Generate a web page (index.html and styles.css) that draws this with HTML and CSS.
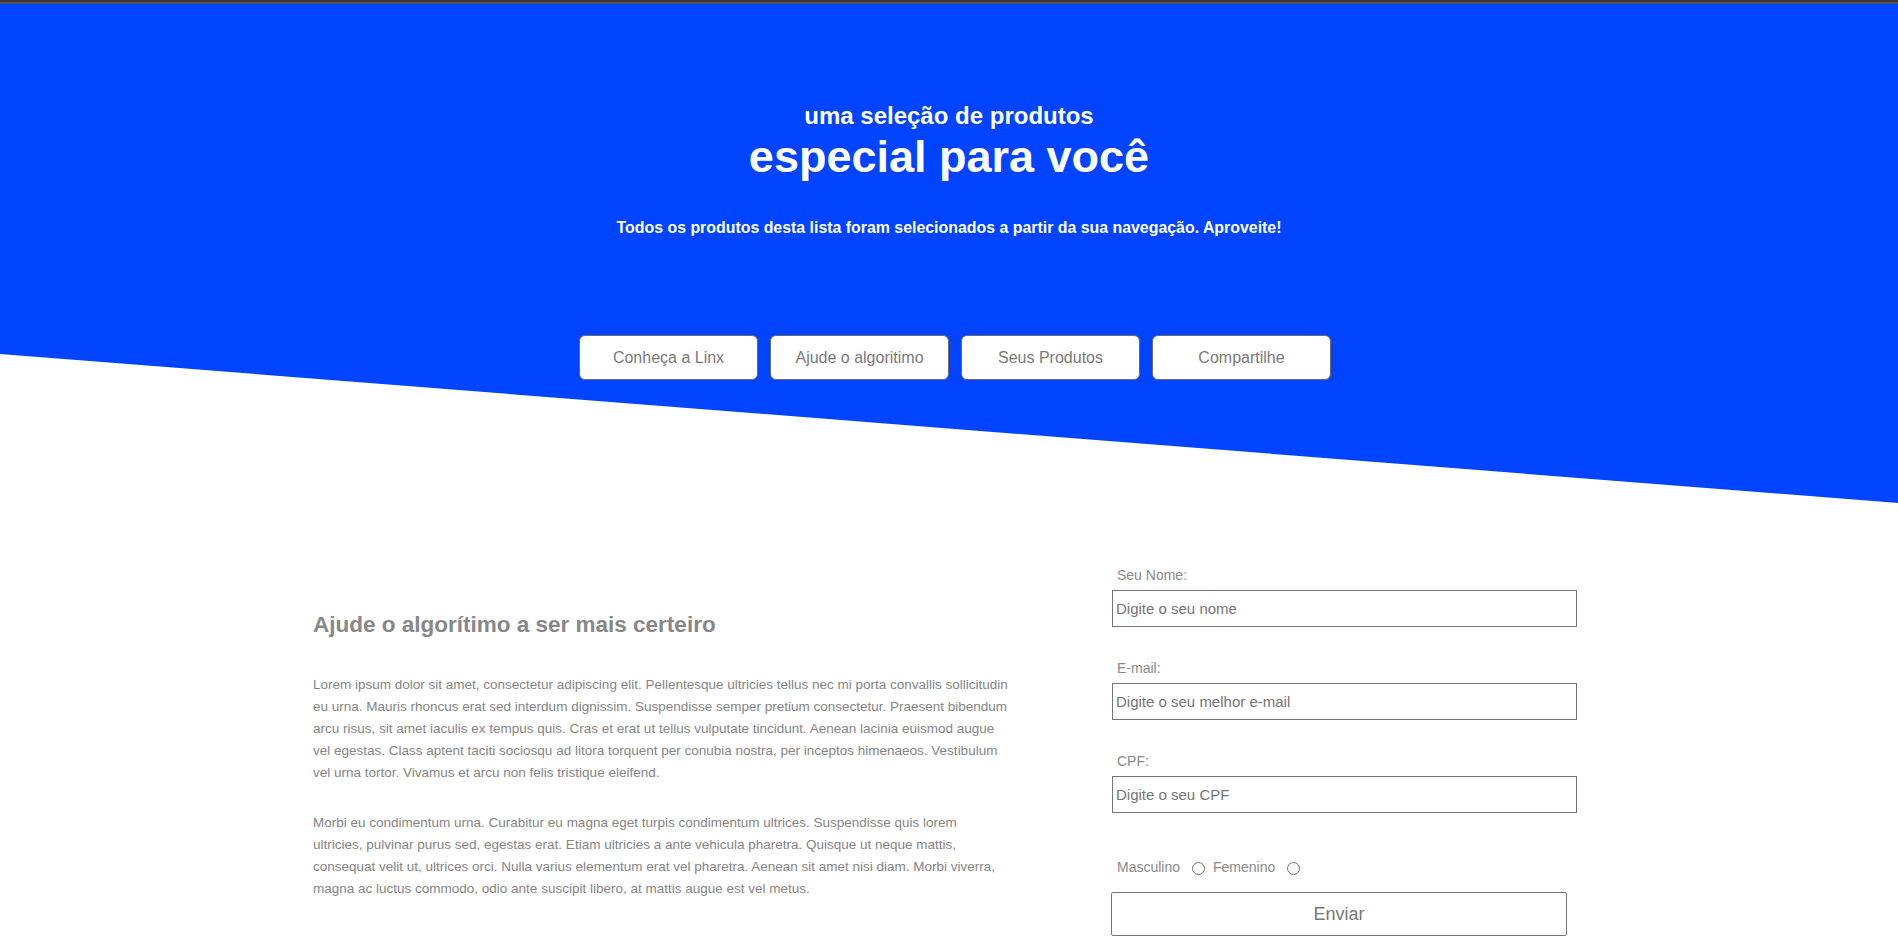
FILE: index.html
```html
<!DOCTYPE html>
<html lang="pt-BR">
<head>
<meta charset="utf-8">
<title>Uma seleção de produtos</title>
<link rel="stylesheet" href="styles.css">
</head>
<body>
<div class="top-bar"></div>
<header class="hero">
  <h2 class="kicker">uma seleção de produtos</h2>
  <h1 class="title">especial para você</h1>
  <p class="lead">Todos os produtos desta lista foram selecionados a partir da sua navegação. Aproveite!</p>
  <nav class="nav">
    <button class="nav-btn">Conheça a Linx</button>
    <button class="nav-btn">Ajude o algoritimo</button>
    <button class="nav-btn">Seus Produtos</button>
    <button class="nav-btn">Compartilhe</button>
  </nav>
</header>
<main class="content">
  <section class="about">
    <h3 class="about-title">Ajude o algorítimo a ser mais certeiro</h3>
    <p class="about-text">Lorem ipsum dolor sit amet, consectetur adipiscing elit. Pellentesque ultricies tellus nec mi porta convallis sollicitudin eu urna. Mauris rhoncus erat sed interdum dignissim. Suspendisse semper pretium consectetur. Praesent bibendum arcu risus, sit amet iaculis ex tempus quis. Cras et erat ut tellus vulputate tincidunt. Aenean lacinia euismod augue vel egestas. Class aptent taciti sociosqu ad litora torquent per conubia nostra, per inceptos himenaeos. Vestibulum vel urna tortor. Vivamus et arcu non felis tristique eleifend.</p>
    <p class="about-text">Morbi eu condimentum urna. Curabitur eu magna eget turpis condimentum ultrices. Suspendisse quis lorem ultricies, pulvinar purus sed, egestas erat. Etiam ultricies a ante vehicula pharetra. Quisque ut neque mattis, consequat velit ut, ultrices orci. Nulla varius elementum erat vel pharetra. Aenean sit amet nisi diam. Morbi viverra, magna ac luctus commodo, odio ante suscipit libero, at mattis augue est vel metus.</p>
  </section>
  <form class="form">
    <label class="field-label" for="nome">Seu Nome:</label>
    <input class="field" id="nome" type="text" placeholder="Digite o seu nome">
    <label class="field-label" for="email">E-mail:</label>
    <input class="field" id="email" type="text" placeholder="Digite o seu melhor e-mail">
    <label class="field-label" for="cpf">CPF:</label>
    <input class="field" id="cpf" type="text" placeholder="Digite o seu CPF">
    <div class="gender">
      <label class="gender-opt">Masculino <input class="radio" type="radio" name="sexo"></label>
      <label class="gender-opt">Femenino <input class="radio" type="radio" name="sexo"></label>
    </div>
    <button class="submit" type="button">Enviar</button>
  </form>
</main>
</body>
</html>
```

FILE: styles.css
```css
* { box-sizing: border-box; }

html, body {
  margin: 0;
  padding: 0;
  background: #ffffff;
  font-family: "Liberation Sans", Arial, sans-serif;
}

.top-bar {
  height: 4px;
  background: linear-gradient(#383838 0, #383838 2px, #555555 2px, #555555 4px);
}

.hero {
  height: 499px;
  background: #0044ff;
  clip-path: polygon(0 0, 100% 0, 100% 100%, 0 350px);
  padding-top: 98px;
  text-align: center;
  color: #ffffff;
}

.kicker {
  margin: 0;
  font-size: 24px;
  line-height: 28px;
  font-weight: bold;
}

.title {
  margin: 1px 0 0;
  font-size: 45px;
  line-height: 52px;
  font-weight: bold;
}

.lead {
  margin: 35px 0 0;
  font-size: 15.9px;
  line-height: 20px;
  font-weight: bold;
}

.nav {
  margin-top: 97px;
  padding-left: 12px;
  display: flex;
  justify-content: center;
  gap: 12px;
}

.nav-btn {
  width: 179px;
  height: 45px;
  background: #ffffff;
  border: 1px solid #6a6a6a;
  border-radius: 6px;
  font-family: "Liberation Sans", Arial, sans-serif;
  font-size: 16px;
  color: #7a7a7a;
  padding: 0;
}

.content {
  display: flex;
  align-items: flex-start;
  width: 1264px;
  margin-left: calc(50% - 636px);
}

.about {
  width: 700px;
  padding-top: 109px;
}

.about-title {
  margin: 0;
  font-size: 22.5px;
  line-height: 26px;
  font-weight: bold;
  color: #878787;
}

.about-text {
  width: 695px;
  margin: 36px 0 0;
  font-size: 13.5px;
  line-height: 22px;
  color: #858585;
}

.about-text + .about-text {
  margin-top: 28px;
}

.form {
  width: 466px;
  margin-left: 98px;
  padding-top: 64px;
  display: flex;
  flex-direction: column;
  align-items: flex-start;
}

.field-label {
  display: block;
  padding-left: 6px;
  font-size: 14px;
  line-height: 16px;
  color: #8a8a8a;
  margin-top: 33px;
}

.field-label:first-child {
  margin-top: 0;
}

.field {
  margin: 7px 0 0 1px;
  width: 465px;
  height: 37px;
  border: 1px solid #767676;
  border-radius: 0;
  padding: 0 3px;
  font-family: "Liberation Sans", Arial, sans-serif;
  font-size: 15px;
  color: #333333;
  background: #ffffff;
}

.field::placeholder {
  color: #757575;
}

.gender {
  margin-top: 46px;
  padding-left: 6px;
  display: flex;
  align-items: center;
  height: 16px;
  font-size: 14px;
  line-height: 16px;
  color: #8a8a8a;
}

.gender-opt {
  display: flex;
  align-items: center;
}

.radio {
  appearance: none;
  -webkit-appearance: none;
  width: 13px;
  height: 13px;
  margin: 3px 8px 0 12px;
  border: 1px solid #6f6f6f;
  border-radius: 50%;
  background: #ffffff;
}

.submit {
  margin-top: 17px;
  width: 456px;
  height: 44px;
  background: #ffffff;
  border: 1px solid #767676;
  border-radius: 2px;
  font-family: "Liberation Sans", Arial, sans-serif;
  font-size: 18px;
  color: #777777;
  padding: 0;
}
```
